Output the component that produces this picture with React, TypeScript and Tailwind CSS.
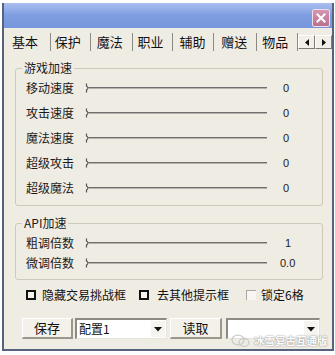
import React from "react";

const FONT = { fontFamily: '"Noto Sans CJK SC", "Liberation Sans", sans-serif' };

function Slider() {
  return (
    <svg width="182" height="12" viewBox="0 0 182 12" className="block">
      <path d="M1.5 1.5 L1.5 4 Q4.5 6 1.5 8 L1.5 10.5" stroke="#555" strokeWidth="1.2" fill="none" />
      <line x1="3" y1="5.5" x2="182" y2="5.5" stroke="#6f6f6f" strokeWidth="1" />
      <line x1="3" y1="6.5" x2="182" y2="6.5" stroke="#b4b2aa" strokeWidth="1" />
    </svg>
  );
}

function Row({ label, value, h, vpl }: { label: string; value: string; h: string; vpl: string }) {
  return (
    <div className={`flex items-center ${h}`}>
      <span className="w-[69px] pl-[10px] text-[12px] leading-[14px] text-[#1a1a1a]">{label}</span>
      <Slider />
      <span
        className={`${vpl} text-[11px] leading-[14px] text-[#222]`}
        style={{ fontFamily: '"Liberation Sans", sans-serif' }}
      >
        {value}
      </span>
    </div>
  );
}

function Box({ disabled }: { disabled?: boolean }) {
  if (disabled)
    return (
      <span className="block w-[10px] h-[10px] bg-[#f7f6f2] border-t border-l border-[#a9a79f]" />
    );
  return <span className="block w-[10px] h-[10px] border-2 border-[#111] bg-[#f6f4ee]" />;
}

function Btn({ children, w }: { children: React.ReactNode; w: string }) {
  return (
    <div
      className={`${w} h-[21px] flex items-center justify-center bg-[#f3f1ea] border-t border-l border-white border-b-2 border-r-2 border-b-[#9a978c] border-r-[#9a978c] text-[13px] leading-[14px] text-[#111]`}
    >
      {children}
    </div>
  );
}

function Combo({ w, text }: { w: string; text?: string }) {
  return (
    <div className={`${w} h-[21px] flex items-center bg-white border-t-2 border-l-2 border-t-[#8d8a82] border-l-[#8d8a82] border-b border-r border-b-[#e6e3da] border-r-[#e6e3da]`}>
      <span className="flex-1 pl-[2px] text-[12px] leading-[14px] text-[#111]">{text}</span>
      <div className="w-[14px] h-[16px] mr-[1px] flex items-center justify-center bg-[#f5f4ef]">
        <svg width="8" height="5" viewBox="0 0 8 5">
          <path d="M0 0 L8 0 L4 4.5 Z" fill="#111" />
        </svg>
      </div>
    </div>
  );
}

export default function App() {
  const tabs: [string, string, string][] = [
    ["保护", "w-[40px]", "pl-[4px]"],
    ["魔法", "w-[42px]", "pl-[6px]"],
    ["职业", "w-[41px]", "pl-[5px]"],
    ["辅助", "w-[41px]", "pl-[6px]"],
    ["赠送", "w-[43px]", "pl-[7px]"],
    ["物品", "w-[41px]", "pl-[5px]"],
  ];
  return (
    <div className="w-[335px] h-[355px] bg-white overflow-hidden relative" style={FONT}>
      <div className="mt-[3px] ml-[2px] w-[332px] h-[348px] bg-[#efece4] border-l-2 border-r-2 border-b-2 border-[#56627e] flex flex-col">
        {/* title bar */}
        <div className="h-[25px] flex justify-end bg-gradient-to-b from-[#aabff0] via-[#7e9de0] to-[#7696dc]">
          <div className="mt-[6px] mr-[2px] w-[18px] h-[18px] rounded-[2px] border border-[#f0dde6] bg-gradient-to-b from-[#d596b3] to-[#b8718f] flex items-center justify-center">
            <svg width="10" height="10" viewBox="0 0 10 10">
              <path d="M1.5 1.5 L8.5 8.5 M8.5 1.5 L1.5 8.5" stroke="white" strokeWidth="2" strokeLinecap="square" />
            </svg>
          </div>
        </div>
        {/* tabs */}
        <div className="h-[24px] flex items-start">
          <div className="w-[47px] h-[18px] mt-[5px] pl-[8px] border-r border-[#8b8b85] text-[13px] leading-[18px] text-[#111]">基本</div>
          {tabs.map(([t, w, pl]) => (
            <div key={t} className={`${w} h-[18px] mt-[5px] ${pl} border-r border-[#8b8b85] text-[13px] leading-[18px] text-[#111]`}>
              {t}
            </div>
          ))}
          <div className="mt-[7px] flex">
            <div className="w-[17px] h-[14px] flex items-center justify-center border-t border-l border-white border-r border-b border-r-[#7c7a72] border-b-[#7c7a72] bg-[#f1efe8]">
              <svg width="4" height="7" viewBox="0 0 4 7"><path d="M4 0 L0 3.5 L4 7 Z" fill="#111" /></svg>
            </div>
            <div className="w-[17px] h-[14px] flex items-center justify-center border-t border-l border-white border-r border-b border-r-[#7c7a72] border-b-[#7c7a72] bg-[#f1efe8]">
              <svg width="4" height="7" viewBox="0 0 4 7"><path d="M0 0 L4 3.5 L0 7 Z" fill="#111" /></svg>
            </div>
          </div>
        </div>
        {/* content */}
        <div className="pl-[11px]">
          <fieldset className="mt-[10px] w-[308px] border border-[#cdc9bd] rounded-[3px] pb-[5px]">
            <legend className="ml-[6px] px-[2px] text-[12px] leading-[12px] text-[#1a1a1a]">游戏加速</legend>
            <div className="pt-[1px]">
              <Row label="移动速度" value="0" h="h-[25px]" vpl="pl-[16px]" />
              <Row label="攻击速度" value="0" h="h-[25px]" vpl="pl-[16px]" />
              <Row label="魔法速度" value="0" h="h-[25px]" vpl="pl-[16px]" />
              <Row label="超级攻击" value="0" h="h-[25px]" vpl="pl-[16px]" />
              <Row label="超级魔法" value="0" h="h-[25px]" vpl="pl-[16px]" />
            </div>
          </fieldset>
          <fieldset className="mt-[11px] w-[308px] border border-[#cdc9bd] rounded-[3px] pb-[6px]">
            <legend className="ml-[6px] px-[2px] text-[12px] leading-[12px] text-[#1a1a1a]">API加速</legend>
            <div className="pt-[4px]">
              <Row label="粗调倍数" value="1" h="h-[20px]" vpl="pl-[18px]" />
              <Row label="微调倍数" value="0.0" h="h-[20px]" vpl="pl-[13px]" />
            </div>
          </fieldset>
        </div>
        {/* checkboxes */}
        <div className="mt-[5px] h-[20px] flex items-center pl-[22px] text-[12px] leading-[14px] text-[#111]">
          <Box />
          <span className="ml-[6px]">隐藏交易挑战框</span>
          <span className="ml-[13px]"><Box /></span>
          <span className="ml-[8px]">去其他提示框</span>
          <span className="ml-[17px]"><Box disabled /></span>
          <span className="ml-[5px]">锁定6格</span>
        </div>
        {/* buttons */}
        <div className="mt-[13px] flex items-center pl-[18px]">
          <Btn w="w-[51px]">保存</Btn>
          <div className="ml-[2px]"><Combo w="w-[92px]" text="配置1" /></div>
          <div className="ml-[3px]"><Btn w="w-[52px]">读取</Btn></div>
          <div className="ml-[4px]"><Combo w="w-[94px]" /></div>
        </div>
      </div>
      {/* watermark */}
      <div className="absolute left-[231px] top-[334px] flex items-center gap-[3px] opacity-90">
        <svg width="20" height="14" viewBox="0 0 20 14">
          <ellipse cx="7" cy="6" rx="6" ry="4.8" fill="none" stroke="#c8c8c8" strokeWidth="1.3" />
          <ellipse cx="13" cy="8.5" rx="5" ry="4" fill="none" stroke="#c8c8c8" strokeWidth="1.3" />
        </svg>
        <span className="text-[10.5px] leading-[14px] font-bold text-white [text-shadow:0_0_1px_#888,0_0_2px_#999]">冰雪复古互通版</span>
      </div>
    </div>
  );
}
